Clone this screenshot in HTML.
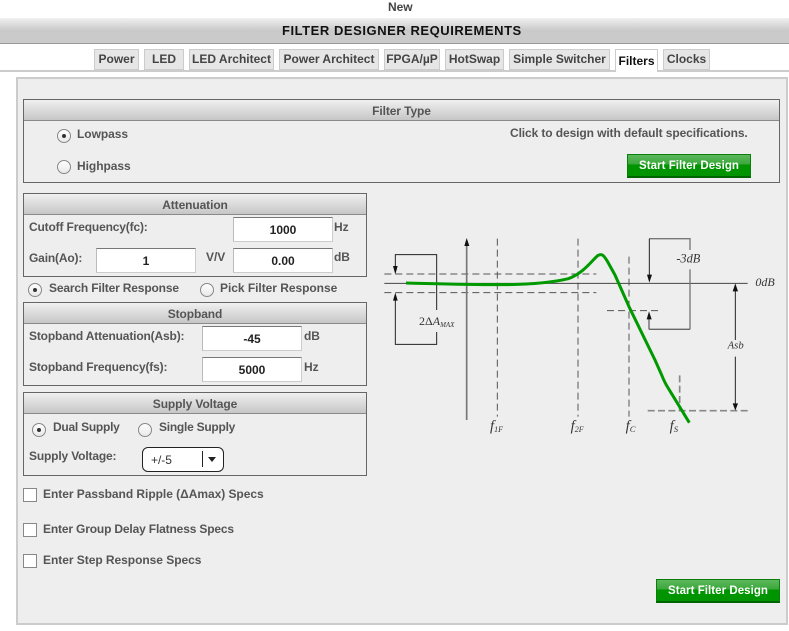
<!DOCTYPE html>
<html><head><meta charset="utf-8"><style>
html,body{margin:0;padding:0;background:#fff}
body{width:789px;height:631px;position:relative;overflow:hidden;font:bold 12px "Liberation Sans",sans-serif;color:#555}
.a,.t,.box,.hd,.tab,.in,.btn,.r,.c{position:absolute;box-sizing:border-box}
.t{white-space:nowrap;line-height:14px;letter-spacing:-.04px}
.n{letter-spacing:-.16px}
.tab{top:49px;height:22px;background:#e6e6e6;border:1px solid #ccc;border-bottom:2px solid #ccc;text-align:center;line-height:19px;color:#444;letter-spacing:0;white-space:nowrap}
.box{border:1px solid #666;background:#eee}
.hd{left:0;right:0;top:0;height:21px;background:linear-gradient(#f0f0f0,#c6c6c6);border-bottom:1px solid #8a8a8a;text-align:center;line-height:22px;letter-spacing:-.1px}
.in{height:25px;width:100px;background:#fff;border:1px solid #ccc;border-top-color:#777;border-left-color:#bbb;text-align:center;color:#222;line-height:24px;font-size:12px}
.btn{width:124px;height:24px;background:linear-gradient(#5cb85c 0,#3aa63a 45%,#009400 46%,#009400 100%);border:1px solid #0a7d0a;border-bottom:2px solid #006400;color:#fff;text-align:center;line-height:23px;font-size:11.5px;letter-spacing:.05px}
.r{width:14px;height:14px;border-radius:50%;background:linear-gradient(#fff,#e8e8e8);border:1px solid #888}
.r.on::after{content:"";position:absolute;left:4px;top:4px;width:4px;height:4px;border-radius:50%;background:#333}
.c{width:14px;height:14px;background:#fff;border:1px solid #888}
svg text{font-weight:normal}
</style></head><body>
<div class="t" style="left:388px;top:0;color:#444;font-size:12px">New</div>
<div class="a" style="left:0;top:18px;width:789px;height:26px;background:linear-gradient(#f0f0f0 0,#c9c9c9 50%,#cbcbcb 100%);border-bottom:1px solid #999;box-sizing:border-box"></div>
<div class="t" style="left:282px;top:24px;color:#111;font-size:13px;letter-spacing:.55px">FILTER DESIGNER REQUIREMENTS</div>

<div class="a" style="left:0;top:70px;width:789px;height:2px;background:#ccc"></div>
<div class="tab" style="left:94px;width:45px">Power</div>
<div class="tab" style="left:144px;width:40px">LED</div>
<div class="tab" style="left:189px;width:85px">LED Architect</div>
<div class="tab" style="left:279px;width:100px">Power Architect</div>
<div class="tab" style="left:384px;width:56px">FPGA/µP</div>
<div class="tab" style="left:445px;width:59px">HotSwap</div>
<div class="tab" style="left:509px;width:101px">Simple Switcher</div>
<div class="tab" style="left:615px;width:43px;height:23px;background:#fff;border-bottom:0;color:#111;line-height:22px">Filters</div>
<div class="tab" style="left:663px;width:47px">Clocks</div>

<div class="a" style="left:16px;top:77px;width:772px;height:548px;background:#eee;border:2px solid #ccc;box-sizing:border-box"></div>

<div class="box" style="left:23px;top:99px;width:757px;height:84px"><div class="hd">Filter Type</div></div>
<div class="r on" style="left:57px;top:129px"></div><div class="t" style="left:77px;top:127px">Lowpass</div>
<div class="r" style="left:57px;top:160px"></div><div class="t" style="left:77px;top:159px">Highpass</div>
<div class="t" style="left:510px;top:126px;letter-spacing:-.1px">Click to design with default specifications.</div>
<div class="btn" style="left:627px;top:154px">Start Filter Design</div>

<div class="box" style="left:23px;top:193px;width:344px;height:84px"><div class="hd">Attenuation</div></div>
<div class="t n" style="left:29px;top:220px">Cutoff Frequency(fc):</div>
<div class="in" style="left:233px;top:217px">1000</div><div class="t" style="left:334px;top:220px">Hz</div>
<div class="t n" style="left:29px;top:251px">Gain(Ao):</div>
<div class="in" style="left:96px;top:248px">1</div><div class="t" style="left:206px;top:250px">V/V</div>
<div class="in" style="left:233px;top:248px">0.00</div><div class="t" style="left:334px;top:250px">dB</div>

<div class="r on" style="left:28px;top:283px"></div><div class="t n" style="left:49px;top:281px">Search Filter Response</div>
<div class="r" style="left:200px;top:283px"></div><div class="t" style="left:220px;top:281px">Pick Filter Response</div>

<div class="box" style="left:23px;top:302px;width:344px;height:84px"><div class="hd">Stopband</div></div>
<div class="t n" style="left:29px;top:329px">Stopband Attenuation(Asb):</div>
<div class="in" style="left:202px;top:326px">-45</div><div class="t" style="left:304px;top:329px">dB</div>
<div class="t n" style="left:29px;top:360px">Stopband Frequency(fs):</div>
<div class="in" style="left:202px;top:357px">5000</div><div class="t" style="left:304px;top:360px">Hz</div>

<div class="box" style="left:23px;top:392px;width:344px;height:84px"><div class="hd">Supply Voltage</div></div>
<div class="r on" style="left:32px;top:423px"></div><div class="t" style="left:53px;top:420px;letter-spacing:-.25px">Dual Supply</div>
<div class="r" style="left:138px;top:423px"></div><div class="t" style="left:159px;top:420px;letter-spacing:-.25px">Single Supply</div>
<div class="t n" style="left:29px;top:449px">Supply Voltage:</div>
<div class="a" style="left:142px;top:447px;width:82px;height:25px;background:#fff;border:1px solid #222;border-radius:6px;box-sizing:border-box"></div>
<div class="t" style="left:151px;top:453px;font-weight:normal;color:#333">+/-5</div>
<div class="a" style="left:202px;top:451px;width:1px;height:16px;background:#222"></div>
<svg class="a" style="left:208px;top:457px" width="9" height="6"><path d="M0 0H8L4 5Z" fill="#222"/></svg>

<div class="c" style="left:23px;top:488px"></div><div class="t" style="left:43px;top:487px">Enter Passband Ripple (ΔAmax) Specs</div>
<div class="c" style="left:23px;top:523px"></div><div class="t n" style="left:43px;top:522px">Enter Group Delay Flatness Specs</div>
<div class="c" style="left:23px;top:554px"></div><div class="t" style="left:43px;top:553px">Enter Step Response Specs</div>
<div class="btn" style="left:656px;top:579px">Start Filter Design</div>

<svg class="a" style="left:375px;top:220px" width="414" height="220" viewBox="0 0 1242 660" fill="none">
<g stroke="#555" stroke-width="3" stroke-dasharray="21 12">
<path d="M28 162H664M28 218H664"/>
<path d="M367 56V590M609 56V590M762 110V590"/>
<path d="M696 272H852"/>
</g>
<g stroke="#888" stroke-width="5" stroke-dasharray="21 10">
<path d="M818 572H1128"/>
<path d="M914 466V572"/>
</g>
<path d="M275 70V600" stroke="#777" stroke-width="5"/>
<path d="M28 190H1118" stroke="#444" stroke-width="3"/>
<path d="M185 270V104H61V150M61 230V373H185V336" stroke="#222" stroke-width="3"/>
<path d="M823 56H945V90M945 148V328" stroke="#777" stroke-width="4"/>
<path d="M822 328H945M822 328V290" stroke="#666" stroke-width="4"/>
<path d="M823 56V170" stroke="#222" stroke-width="3"/>
<path d="M1081 205V360M1081 410V560" stroke="#222" stroke-width="3"/>
<g fill="#111">
<path d="M54 138H68L61 163Z"/><path d="M54 242H68L61 218Z"/>
<path d="M268 78H283L275 54Z"/>
<path d="M816 164H831L823 188Z"/><path d="M815 298H830L822 274Z"/>
<path d="M1073 214H1089L1081 190Z"/><path d="M1073 550H1089L1081 572Z"/>
</g>
<path d="M93 189C180 191 275 194 367 194S530 188 580 176C625 160 650 122 668 107C680 99 686 106 696 122L720 165L762 260L800 338L840 420L860 465Q870 490 880 505L943 608" stroke="#009a00" stroke-width="9" stroke-linejoin="round"/>
<g font-family="'Liberation Serif',serif" fill="#333" font-size="36">
<text x="132" y="315">2Δ<tspan font-style="italic">A</tspan><tspan font-style="italic" font-size="21" dy="6">MAX</tspan></text>
<text x="904" y="128" font-style="italic" font-size="37">-3dB</text>
<text x="1141" y="198" font-style="italic" font-size="36">0dB</text>
<text x="1058" y="386" font-style="italic" font-size="32">Asb</text>
<text x="345" y="632" font-style="italic" font-size="44">f<tspan font-size="24" dy="4">1F</tspan></text>
<text x="587" y="632" font-style="italic" font-size="44">f<tspan font-size="24" dy="4">2F</tspan></text>
<text x="752" y="632" font-style="italic" font-size="44">f<tspan font-size="26" dy="4">C</tspan></text>
<text x="884" y="632" font-style="italic" font-size="44">f<tspan font-size="26" dy="4">S</tspan></text>
</g>
</svg>
</body></html>
